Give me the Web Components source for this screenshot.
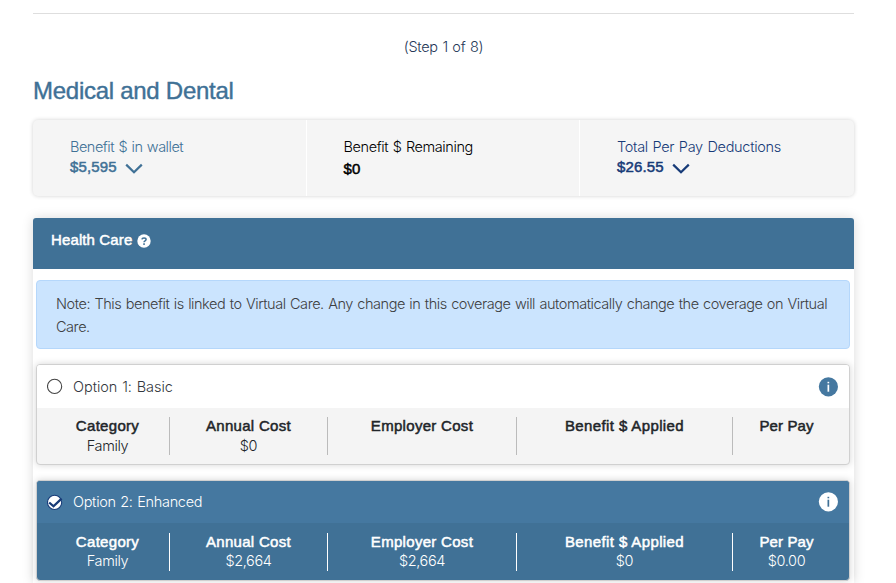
<!DOCTYPE html>
<html lang="en">
<head>
<meta charset="utf-8">
<title>Medical and Dental</title>
<style>
html,body{margin:0;background:#fff}
body{height:583px;overflow:hidden;font:300 14.5px/20px Inter,"Liberation Sans",sans-serif;color:#212529;word-spacing:.8px}
</style>
</head>
<body>
<benefits-page></benefits-page>
<script>
const define = (name, html, setup) => customElements.define(name, class extends HTMLElement {
  connectedCallback() {
    if (this.shadowRoot) return;
    const t = document.createElement('template');
    t.innerHTML = html;
    this.attachShadow({mode: 'open'}).append(t.content.cloneNode(true));
    if (setup) setup(this, this.shadowRoot);
  }
});
const BOLD = 'font:400 15px/20px "Liberation Sans",sans-serif;word-spacing:0;-webkit-text-stroke:.5px currentColor;';

define('chevron-icon', `<style>:host{display:block;width:18px;height:12px}svg{display:block}</style>
<svg width="18" height="12" viewBox="0 0 18 12" fill="none" stroke="currentColor" stroke-width="2.2"><path d="M1.2 1.6 9 9.2l7.800-7.600"/></svg>`);

define('help-icon', `<style>:host{display:block;width:14px;height:14px}svg{display:block}</style>
<svg width="14" height="14" viewBox="0 0 14 14"><circle cx="7" cy="7" r="6.700" fill="#fff"/><path d="M4.900 5.400C5.100 3.500 9.100 3.500 9.100 5.500 9.100 6.900 7 6.700 7 8.200" fill="none" stroke="#407196" stroke-width="1.500"/><rect x="6.200" y="9.300" width="1.700" height="1.600" fill="#407196"/></svg>`);

define('info-icon', `<style>:host{display:block;width:20px;height:20px}svg{display:block}</style>
<svg width="20" height="20" viewBox="0 0 20 20"><circle cx="10.400" cy="9.800" r="9.600" fill="currentColor"/><g fill="var(--glyph,#fff)"><rect x="9.500" y="4.800" width="1.700" height="1.500"/><rect x="9.500" y="7.700" width="1.700" height="7"/></g></svg>`);

define('radio-mark', `<style>:host{display:block;width:17px;height:17px}svg{display:block}.tick{display:none}:host([checked]) .tick{display:block}:host([checked]) circle{stroke:#173b78}</style>
<svg width="17" height="17" viewBox="0 0 17 17" fill="none"><circle cx="7.600" cy="8.400" r="7.100" fill="#fff" stroke="#444" stroke-width="1.100"/><path class="tick" d="M2.200 8.500 6.500 12.300 14.600 4.600" stroke="#173b78" stroke-width="2.300"/></svg>`);

define('wallet-item', `<style>
:host{display:block;box-sizing:border-box;padding:17px 0 0 37px;border-left:1px solid #fff}
:host([first]){border-left:0}
.value{display:flex;align-items:flex-start;gap:8px;padding-top:var(--gap,0)}
b{${BOLD}letter-spacing:.15px}
chevron-icon{margin-top:6px}
</style><slot></slot><div class="value"><b></b></div>`, (el, r) => {
  const b = r.querySelector('b');
  b.textContent = el.getAttribute('value');
  if (el.hasAttribute('expandable')) b.after(document.createElement('chevron-icon'));
});

define('wallet-bar', `<style>:host{display:grid;grid-template-columns:272.500px 273.500px 1fr;height:76px;background:#f5f5f5;border-radius:5px;box-shadow:0 0 4px rgba(0,0,0,.18)}</style><slot></slot>`);

define('note-box', `<style>:host{display:block;box-sizing:border-box;height:69px;margin:11px 4px 0 3px;padding:11px 19px 0;background:#cbe4fe;border:1px solid #b5d7fb;border-radius:4px;line-height:23px;letter-spacing:-.452px;color:#3d4042}</style><slot></slot>`);

define('cost-cell', `<style>
:host{display:block;text-align:center;box-sizing:border-box;border-right:1px solid var(--line,#bbb)}
:host(:last-of-type){border-right:0}
b{display:block;margin-top:-1px;${BOLD}letter-spacing:var(--track,.3px)}
span{display:block;letter-spacing:-.37px;margin-top:var(--value-gap,0)}
</style><b></b><span><slot></slot></span>`, (el, r) => { r.querySelector('b').textContent = el.getAttribute('label'); });

define('plan-option', `<style>
:host{display:block;box-sizing:border-box;height:101px;margin:15px 4px 0 3px;border:1px solid #d0d0d0;border-radius:4px;overflow:hidden;box-shadow:0 0 7px rgba(0,0,0,.17);background:#f4f4f4}
header{display:flex;align-items:center;height:43px;padding:0 11px 0 10px;box-sizing:border-box;background:#fff;color:#33383d}
.name{flex:1;margin-left:9px;letter-spacing:var(--name-track,0)}
info-icon{color:#4578a0}
.cells{display:grid;grid-template-columns:124px 158px 189px 216px 107px;padding:9px 9px 0}
::slotted(*){height:38px}
:host([selected]){background:#407196;color:#fff;--line:#fff;--value-gap:-1px}
:host([selected]) header{background:#4578a0;color:#fff;height:42px}
:host([selected]) info-icon{color:#fff;--glyph:#407196}
:host([selected]) .cells{padding-top:10px}
</style>
<header><radio-mark></radio-mark><span class="name"></span><info-icon></info-icon></header>
<div class="cells"><slot></slot></div>`, (el, r) => {
  r.querySelector('.name').textContent = el.getAttribute('name');
  if (el.hasAttribute('selected')) r.querySelector('radio-mark').setAttribute('checked', '');
});

define('benefit-panel', `<style>
:host{display:block;margin-top:22px;height:365px;border-radius:4px 4px 0 0;box-shadow:0 0 12px rgba(0,0,0,.15)}
header{display:flex;box-sizing:border-box;height:51px;padding:12px 18px 0;background:#407196;color:#fff;border-radius:3px 3px 0 0;gap:5px}
h2{margin:0;${BOLD}letter-spacing:.12px}
help-icon{margin-top:4px}
</style><header><h2></h2><help-icon></help-icon></header><slot></slot>`, (el, r) => { r.querySelector('h2').textContent = el.getAttribute('heading'); });

define('benefits-page', `<style>
:host{display:block;box-sizing:border-box;width:854px;height:583px;padding:13px 0 0 33px}
hr{height:1px;border:0;margin:0;background:#dedede}
.step{text-align:center;margin-top:23px;letter-spacing:-.3px;color:#263858}
h1{margin:19px 0 14px;font:400 24px/30px "Liberation Sans",sans-serif;word-spacing:0;letter-spacing:-.27px;color:#407196;-webkit-text-stroke:.4px currentColor}
.a{color:#407196;letter-spacing:-.49px}.b{color:#000;letter-spacing:-.4px;--gap:2px}.c{color:#173b78;letter-spacing:-.3px}
</style>
<hr><div class="step">(Step 1 of 8)</div>
<h1>Medical and Dental</h1>
<wallet-bar>
<wallet-item first expandable class="a" value="$5,595">Benefit $ in wallet</wallet-item>
<wallet-item class="b" value="$0">Benefit $ Remaining</wallet-item>
<wallet-item expandable class="c" value="$26.55">Total Per Pay Deductions</wallet-item>
</wallet-bar>
<benefit-panel heading="Health Care">
<note-box>Note: This benefit is linked to Virtual Care. Any change in this coverage will automatically change the coverage on Virtual Care.</note-box>
<plan-option name="Option 1: Basic" style="--name-track:-.04px">
<cost-cell label="Category">Family</cost-cell><cost-cell label="Annual Cost">$0</cost-cell><cost-cell label="Employer Cost"></cost-cell><cost-cell label="Benefit $ Applied" style="--track:.38px"></cost-cell><cost-cell label="Per Pay" style="--track:.1px"></cost-cell>
</plan-option>
<plan-option selected name="Option 2: Enhanced" style="--name-track:-.31px">
<cost-cell label="Category">Family</cost-cell><cost-cell label="Annual Cost">$2,664</cost-cell><cost-cell label="Employer Cost">$2,664</cost-cell><cost-cell label="Benefit $ Applied" style="--track:.38px">$0</cost-cell><cost-cell label="Per Pay" style="--track:.1px">$0.00</cost-cell>
</plan-option>
</benefit-panel>`);
</script>
</body>
</html>
